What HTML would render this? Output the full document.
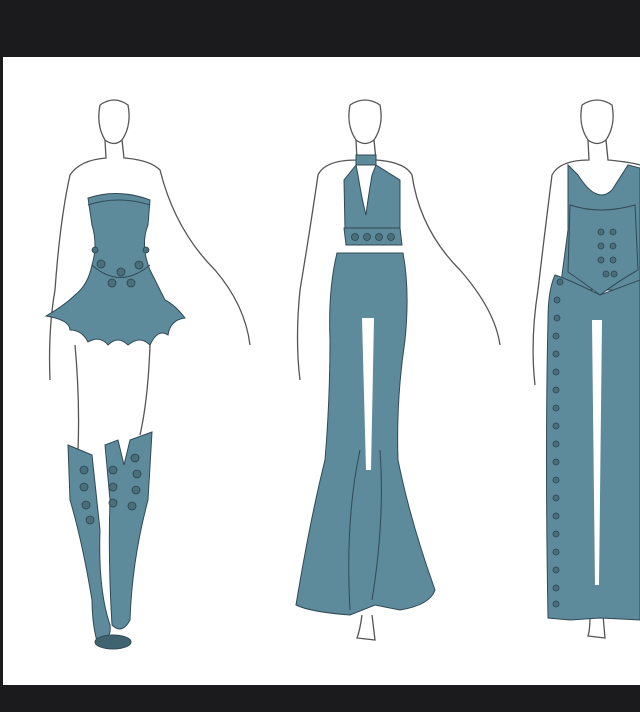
<!DOCTYPE html>
<html><head><style>
html,body{margin:0;padding:0;background:#1b1b1d;}
svg{display:block}
</style></head><body>
<svg width="640" height="712" viewBox="0 0 640 712" xmlns="http://www.w3.org/2000/svg">
<rect x="0" y="0" width="640" height="712" fill="#1b1b1d"/>
<rect x="3" y="57" width="637" height="628" fill="#ffffff"/>
<g fill="none" stroke="#555" stroke-width="1.3">
<path d="M100 105 Q114 95 128 105 Q132 125 122 140 L124 158 Q150 160 160 170 Q175 230 215 270 Q245 305 250 345"/>
<path d="M105 140 L106 158 Q80 160 70 175 Q60 220 55 290 Q48 330 50 380"/>
<path d="M100 105 Q96 125 105 140 Q114 147 122 140"/>
<path d="M75 345 Q80 400 78 450 M150 345 Q148 400 140 435"/>
<path d="M350 105 Q365 95 380 105 Q384 125 374 140 L376 160 Q405 162 412 175 Q420 230 460 270 Q495 310 500 345"/>
<path d="M356 140 L357 160 Q325 160 318 175 Q310 230 300 290 Q295 340 300 380"/>
<path d="M350 105 Q346 125 356 140 Q365 147 374 140"/>
<path d="M362 615 Q360 630 357 638 L375 640 L372 615"/>
<path d="M582 105 Q597 95 612 105 Q616 125 606 140 L608 160 Q630 162 640 165"/>
<path d="M588 140 L589 160 Q560 160 552 175 Q545 230 538 290 Q530 340 535 385"/>
<path d="M582 105 Q578 125 588 140 Q597 147 606 140"/>
<path d="M590 615 Q590 630 588 636 L605 638 L603 615"/>
</g>
<g fill="#5e8b9c" stroke="#2f4a55" stroke-width="1">
<path d="M88 198 Q118 188 150 200 L148 225 Q140 245 150 270 Q160 290 165 300 Q175 305 185 318 Q170 320 168 335 Q158 328 150 345 Q140 335 128 345 Q118 335 108 345 Q100 335 88 342 Q82 330 70 330 Q70 320 46 316 Q65 305 75 295 Q88 285 92 265 Q98 245 92 225 Z"/>
<path d="M92 265 Q120 290 150 265" fill="none"/>
<path d="M88 205 Q118 195 150 205" fill="none"/>
<path d="M68 445 L92 455 L100 530 Q98 590 110 625 Q112 640 98 645 Q92 625 92 600 Q82 540 70 500 Z"/>
<path d="M105 445 L118 440 L124 465 L130 440 L152 432 L148 500 Q132 560 130 620 Q122 635 112 625 Q108 560 110 500 Z"/>
<ellipse cx="113" cy="642" rx="18" ry="7" fill="#3f6470"/>
<rect x="356" y="155" width="20" height="10"/>
<path d="M356 165 L344 180 L345 230 L400 230 L400 180 L376 165 L372 175 Q367 205 366 215 Q362 200 358 175 Z"/>
<path d="M344 228 L400 228 L402 245 L346 245 Z"/>
<path d="M337 253 L403 253 Q410 290 405 340 Q396 400 398 460 Q410 520 435 590 Q430 605 400 610 L375 605 L350 615 Q310 612 296 605 Q310 520 325 460 Q330 400 330 340 Q328 290 337 253 Z"/>
<path d="M362 318 L374 318 L371 470 L366 470 Z" fill="#fff" stroke="none"/>
<path d="M360 450 Q345 520 350 610 M380 450 Q385 520 372 600" fill="none"/>
<path d="M568 165 L578 175 Q597 205 612 190 L628 165 L640 168 L640 290 L560 290 L568 230 Z"/>
<path d="M570 205 Q600 215 635 205 L638 270 Q620 280 600 295 Q580 280 568 272 Z"/>
<path d="M555 275 Q570 280 600 295 L640 280 L640 620 L600 618 L570 620 L548 618 Q545 450 548 320 Q548 290 555 275 Z"/>
<path d="M592 320 L602 320 L599 585 L595 585 Z" fill="#fff" stroke="none"/>
</g>
<g fill="#4a6f7c" stroke="#2c444e" stroke-width="0.8">
<circle cx="101" cy="264" r="4"/><circle cx="121" cy="272" r="4"/><circle cx="139" cy="265" r="4"/><circle cx="112" cy="283" r="4"/><circle cx="131" cy="283" r="4"/><circle cx="95" cy="250" r="3"/><circle cx="146" cy="250" r="3"/>
<circle cx="84" cy="470" r="4"/><circle cx="84" cy="487" r="4"/><circle cx="86" cy="505" r="4"/><circle cx="90" cy="520" r="4"/>
<circle cx="135" cy="458" r="4"/><circle cx="137" cy="474" r="4"/><circle cx="136" cy="490" r="4"/><circle cx="132" cy="506" r="4"/>
<circle cx="113" cy="470" r="4"/><circle cx="113" cy="487" r="4"/><circle cx="113" cy="503" r="4"/>
<circle cx="355" cy="237" r="3.5"/><circle cx="367" cy="237" r="3.5"/><circle cx="379" cy="237" r="3.5"/><circle cx="391" cy="237" r="3.5"/>
<circle cx="601" cy="232" r="3"/><circle cx="613" cy="232" r="3"/><circle cx="601" cy="246" r="3"/><circle cx="613" cy="246" r="3"/><circle cx="601" cy="260" r="3"/><circle cx="613" cy="260" r="3"/><circle cx="606" cy="274" r="3"/><circle cx="614" cy="274" r="3"/>
<circle cx="560" cy="282" r="3"/><circle cx="557" cy="300" r="3"/><circle cx="557" cy="318" r="3"/><circle cx="556" cy="336" r="3"/><circle cx="556" cy="354" r="3"/><circle cx="556" cy="372" r="3"/><circle cx="556" cy="390" r="3"/><circle cx="556" cy="408" r="3"/><circle cx="556" cy="426" r="3"/><circle cx="556" cy="444" r="3"/><circle cx="556" cy="462" r="3"/><circle cx="556" cy="480" r="3"/><circle cx="556" cy="498" r="3"/><circle cx="556" cy="516" r="3"/><circle cx="556" cy="534" r="3"/><circle cx="556" cy="552" r="3"/><circle cx="556" cy="570" r="3"/><circle cx="556" cy="588" r="3"/><circle cx="556" cy="604" r="3"/>
</g>
</svg>
</body></html>
